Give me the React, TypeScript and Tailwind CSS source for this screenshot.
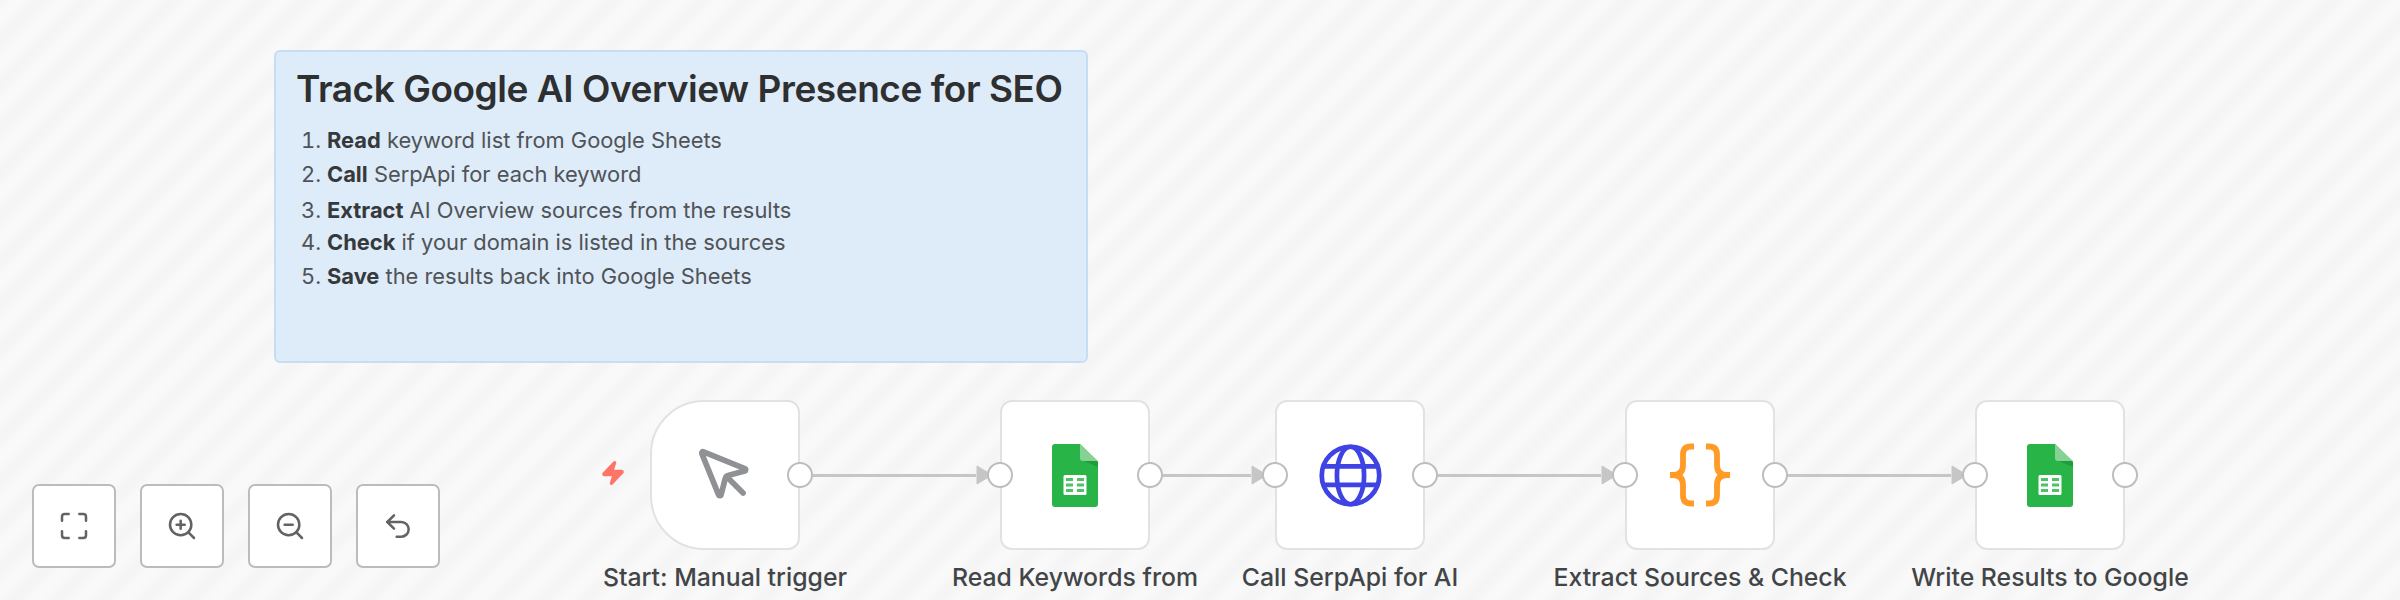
import { Fragment } from "react";
import { Maximize, MousePointer, Undo2, Zap, ZoomIn, ZoomOut } from "lucide-react";

interface FlowNodeProps {
  title: string;
  icon: React.ReactNode;
  trigger?: boolean;
}

function SheetsIcon() {
  return (
    <svg width="46" height="63" viewBox="0 0 46 63">
      <path d="M3 0H28L46 18V60Q46 63 43 63H3Q0 63 0 60V3Q0 0 3 0Z" fill="#28b446" />
      <path d="M32 17H45L46 18V23Z" fill="#219b3c" />
      <path d="M28 0L46 17H31Q28 17 28 14Z" fill="#86d294" />
      <rect x="11.5" y="31" width="23" height="20" rx="1.5" fill="#fff" />
      <path d="M14 34h7v3h-7zM25 34h7v3h-7zM14 39.5h7v3h-7zM25 39.5h7v3h-7zM14 45h7v3h-7zM25 45h7v3h-7z" fill="#4fc267" />
    </svg>
  );
}

function GlobeIcon() {
  return (
    <svg width="63" height="63" viewBox="0 0 64 64" fill="none" stroke="#3f43e4" strokeWidth="4.8">
      <circle cx="32" cy="32" r="29.2" />
      <ellipse cx="32" cy="32" rx="13.8" ry="29.2" />
      <path d="M4 22.8h56M4 41.5h56" />
    </svg>
  );
}

function BracesIcon() {
  return (
    <svg width="64" height="64" viewBox="0 0 64 64" fill="none" stroke="#ff9b26" strokeWidth="5.8">
      <path d="M26 3.5H23Q15 3.5 15 11.5V22Q15 32 5 32Q15 32 15 42V52.5Q15 60.5 23 60.5H26M2 32H8" />
      <path d="M38 3.5H41Q49 3.5 49 11.5V22Q49 32 59 32Q49 32 49 42V52.5Q49 60.5 41 60.5H38M62 32H56" />
    </svg>
  );
}

const nodes = [
  { title: "Start: Manual trigger", icon: <MousePointer size={62} strokeWidth={2.2} color="#8f9194" />, trigger: true, edge: "w-[200px]" },
  { title: "Read Keywords from", icon: <SheetsIcon />, edge: "w-[125px]" },
  { title: "Call SerpApi for AI", icon: <GlobeIcon />, edge: "w-[200px]" },
  { title: "Extract Sources & Check", icon: <BracesIcon />, edge: "w-[200px]" },
  { title: "Write Results to Google", icon: <SheetsIcon /> },
];

const steps = [
  { verb: "Read", text: "keyword list from Google Sheets", className: "h-[34px]" },
  { verb: "Call", text: "SerpApi for each keyword", className: "h-9" },
  { verb: "Extract", text: "AI Overview sources from the results", className: "h-8" },
  { verb: "Check", text: "if your domain is listed in the sources", className: "h-[34px]" },
  { verb: "Save", text: "the results back into Google Sheets", className: "h-[34px]" },
];

const controls = [
  { label: "Fit view", Icon: Maximize },
  { label: "Zoom in", Icon: ZoomIn },
  { label: "Zoom out", Icon: ZoomOut },
  { label: "Reset zoom", Icon: Undo2 },
];

function StickyNote() {
  return (
    <section className="flex h-[313px] w-[814px] flex-col gap-[9px] rounded-md border-2 border-[#c5def4] bg-[#deebf8] pl-5 pt-3">
      <h1 className="whitespace-nowrap text-[37px] font-[560] leading-[50px] tracking-[-0.45px] text-[#2d2f31]">
        Track Google AI Overview Presence for SEO
      </h1>
      <ol className="flex flex-col pl-[5px] text-[21.87px] leading-[34px] text-[#4f5357]">
        {steps.map((step, index) => (
          <li key={step.verb} className={`flex ${step.className}`}>
            <span className="w-[26px] tabular-nums">{index + 1}.</span>
            <span>
              <strong className="font-bold text-[#36393c]">{step.verb}</strong> {step.text}
            </span>
          </li>
        ))}
      </ol>
    </section>
  );
}

function Edge({ className }: { className: string }) {
  return (
    <div className={`flex h-[150px] shrink-0 items-center pr-2 ${className}`}>
      <div className="h-[3px] flex-1 bg-[#c6c6c6]" />
      <svg width="16" height="20" viewBox="0 0 16 20">
        <path d="M1 1L16 10L1 19Z" fill="#c6c6c6" stroke="#c6c6c6" strokeLinejoin="round" />
      </svg>
    </div>
  );
}

function Handle({ className }: { className: string }) {
  return <span className={`absolute size-[26px] rounded-full border-[2.5px] border-[#bdbdbd] bg-white ${className}`} />;
}

function FlowNode({ title, icon, trigger }: FlowNodeProps) {
  return (
    <div className="flex w-[150px] shrink-0 flex-col items-center gap-3">
      <div
        className={`relative flex size-[150px] items-center justify-center border-2 border-[#e2e2e2] bg-white ${
          trigger ? "rounded-l-[54px] rounded-r-xl" : "rounded-xl"
        }`}
      >
        {trigger ? (
          <Zap size={26} className="absolute right-[172px] mb-1 fill-[#ff7468] text-[#ff7468]" />
        ) : (
          <Handle className="-left-[15px]" />
        )}
        {icon}
        <Handle className="-right-[15px]" />
      </div>
      <div className="whitespace-nowrap text-[24.8px] font-medium leading-[31px] text-[#424548]">{title}</div>
    </div>
  );
}

export default function App() {
  return (
    <main className="relative flex h-[600px] w-full flex-col gap-[37px] overflow-hidden bg-[repeating-linear-gradient(135deg,#f5f5f5_0px,#f9f9f9_10px,#f9f9f9_16px,#f5f5f5_26px,#f5f5f5_31.17px)] pt-[50px] font-['Inter','Liberation_Sans',sans-serif]">
      <div className="pl-[274px]">
        <StickyNote />
      </div>
      <div className="flex items-start pl-[650px]">
        {nodes.map(({ edge, ...node }) => (
          <Fragment key={node.title}>
            <FlowNode {...node} />
            {edge && <Edge className={edge} />}
          </Fragment>
        ))}
      </div>
      <div className="absolute bottom-8 left-8 flex gap-6">
        {controls.map(({ label, Icon }) => (
          <button key={label} aria-label={label} className="flex size-[84px] items-center justify-center rounded-[7px] border-2 border-[#bcbcbc] bg-white text-[#636363]">
            <Icon size={32} strokeWidth={1.9} />
          </button>
        ))}
      </div>
    </main>
  );
}
